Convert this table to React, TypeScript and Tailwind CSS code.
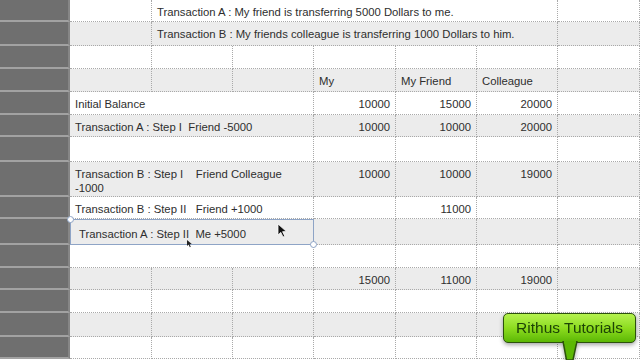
import React from "react";

type Cell = { span?: string; text?: string; right?: boolean; selected?: boolean };
type Row = { h: string; cells: Cell[] };

const empty = (n: number): Cell[] => Array.from({ length: n }, () => ({}));

const rows: Row[] = [
  { h: "h-[22px]", cells: [{}, { span: "col-span-5", text: "Transaction A : My friend is transferring 5000 Dollars to me." }, {}] },
  { h: "h-[24px]", cells: [{}, { span: "col-span-5", text: "Transaction B : My friends colleague is transferring 1000 Dollars to him." }, {}] },
  { h: "h-[23px]", cells: empty(7) },
  { h: "h-[23px]", cells: [{}, {}, {}, { text: "My" }, { text: "My Friend" }, { text: "Colleague" }, {}] },
  {
    h: "h-[23px]",
    cells: [{ span: "col-span-3", text: "Initial Balance" }, { text: "10000", right: true }, { text: "15000", right: true }, { text: "20000", right: true }, {}],
  },
  {
    h: "h-[22px]",
    cells: [
      { span: "col-span-3", text: "Transaction A : Step I  Friend -5000" },
      { text: "10000", right: true },
      { text: "10000", right: true },
      { text: "20000", right: true },
      {},
    ],
  },
  { h: "h-[25px]", cells: [{ span: "col-span-3" }, {}, {}, {}, {}] },
  {
    h: "h-[35px]",
    cells: [
      { span: "col-span-3", text: "Transaction B : Step I    Friend Colleague\n-1000" },
      { text: "10000", right: true },
      { text: "10000", right: true },
      { text: "19000", right: true },
      {},
    ],
  },
  { h: "h-[22px]", cells: [{ span: "col-span-3", text: "Transaction B : Step II   Friend +1000" }, {}, { text: "11000", right: true }, {}, {}] },
  { h: "h-[26px]", cells: [{ span: "col-span-3", text: "Transaction A : Step II  Me +5000", selected: true }, {}, {}, {}, {}] },
  { h: "h-[23px]", cells: [{ span: "col-span-3" }, {}, {}, {}, {}] },
  { h: "h-[22px]", cells: [{}, {}, {}, { text: "15000", right: true }, { text: "11000", right: true }, { text: "19000", right: true }, {}] },
  { h: "h-[23px]", cells: empty(7) },
  { h: "h-[24px]", cells: empty(7) },
  { h: "h-[22px]", cells: empty(7) },
];

function SheetCell({ cell }: { cell: Cell }) {
  if (cell.selected) {
    return (
      <div className={`relative border border-[#8ea4c6] pl-[8px] pt-[7px] leading-[14px] whitespace-pre ${cell.span ?? ""}`}>
        {cell.text}
        <span className="absolute -left-[4px] -top-[4px] h-[7px] w-[7px] rounded-full border border-[#8ea4c6] bg-white" />
        <span className="absolute -right-[4px] -bottom-[4px] h-[7px] w-[7px] rounded-full border border-[#8ea4c6] bg-white" />
      </div>
    );
  }
  return (
    <div
      className={`whitespace-pre border-r border-b border-dotted border-[#a9a9a9] px-[5px] pt-[5px] leading-[14px] ${cell.span ?? ""} ${
        cell.right ? "text-right" : "text-left"
      }`}
    >
      {cell.text}
    </div>
  );
}

export default function App() {
  return (
    <div
      className="relative h-[360px] w-[640px] overflow-hidden bg-white text-[11.3px] text-[#2e2e2e]"
      style={{ fontFamily: '"Liberation Sans", Arial, sans-serif' }}
    >
      {rows.map((row, i) => (
        <div key={i} className={`flex ${row.h}`}>
          <div className="w-[70px] shrink-0 border-r-2 border-b-2 border-r-[#868686] border-b-[#a2a2a2] bg-[#6f6f6f]" />
          <div
            className={`grid flex-1 grid-cols-[82px_81px_81px_82px_81px_81px_82px] ${i % 2 === 1 ? "bg-[#ececec]" : "bg-white"}`}
          >
            {row.cells.map((cell, j) => (
              <SheetCell key={j} cell={cell} />
            ))}
          </div>
        </div>
      ))}

      {/* mouse pointers */}
      <svg className="absolute left-[277px] top-[223px]" width="11" height="15" viewBox="0 0 11 15">
        <path d="M1 1 L1 12 L3.8 9.4 L6 14 L7.8 13.2 L5.6 8.7 L9.5 8.6 Z" fill="#111" stroke="#fff" strokeWidth="0.8" />
      </svg>
      <svg className="absolute left-[186px] top-[239px]" width="7" height="9" viewBox="0 0 7 9">
        <path d="M1 1 L1 7 L2.6 5.6 L3.8 8.3 L4.8 7.8 L3.6 5.2 L5.8 5.1 Z" fill="#222" />
      </svg>

      {/* watermark callout */}
      <div className="absolute left-[503px] top-[313px] drop-shadow-[0_2px_2px_rgba(0,0,0,0.35)]">
        <div className="flex h-[30px] w-[133px] items-center justify-center rounded-[5px] border-[1.5px] border-[#2c520c] bg-gradient-to-b from-[#b4f24c] via-[#8ddc1e] to-[#5cb804] text-[15.5px] text-[#1d4406]">
          Rithus Tutorials
        </div>
        <svg className="absolute left-[59px] top-[28px]" width="16" height="20" viewBox="0 0 16 20">
          <path d="M1 0 L4.5 19 L11 19 L15 0 Z" fill="#5cb804" stroke="#2c520c" strokeWidth="1.5" />
          <rect x="2" y="0" width="12" height="2.5" fill="#5cb804" />
        </svg>
      </div>
    </div>
  );
}
